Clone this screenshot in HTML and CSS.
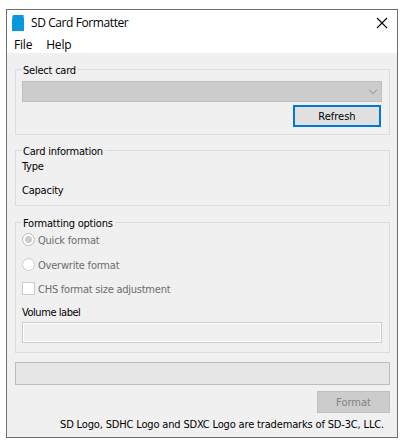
FILE: index.html
```
<!DOCTYPE html>
<html lang="en">
<head>
  <meta charset="UTF-8">
  <title>SD Card Formatter</title>
  <link rel="stylesheet" href="styles.css">
</head>
<body>
<div class="window">
  <header class="titlebar">
    <svg class="app-icon" width="12" height="16" viewBox="0 0 12 16">
      <path d="M1 0h10l1 1v15H0V3l1-1z" fill="#0898dc"/>
      <path d="M.5 1v3M11.5 1v2" stroke="#62bde8" stroke-width="1"/>
    </svg>
    <span class="title">SD Card Formatter</span>
    <svg class="close" width="10" height="10" viewBox="0 0 10 10">
      <path d="M0 0l10 10M10 0L0 10" stroke="#000" stroke-width="1.1"/>
    </svg>
  </header>
  <nav class="menu">
    <span class="menu-file">File</span>
    <span class="menu-help">Help</span>
  </nav>
  <main class="content">
    <fieldset class="group select-card">
      <legend><span class="t-select">Select card</span></legend>
      <div class="combo">
        <svg width="10" height="6" viewBox="0 0 10 6">
          <path d="M1 .7l4 4 4-4" fill="none" stroke="#a3a3a3" stroke-width="1.2"/>
        </svg>
      </div>
      <button class="btn refresh"><span class="t-refresh">Refresh</span></button>
    </fieldset>

    <fieldset class="group card-info">
      <legend><span class="t-info">Card information</span></legend>
      <div class="row"><span class="t-type">Type</span></div>
      <div class="row"><span class="t-capacity">Capacity</span></div>
    </fieldset>

    <fieldset class="group options">
      <legend><span class="t-options">Formatting options</span></legend>
      <label class="option"><i class="radio checked"></i><span class="t-quick">Quick format</span></label>
      <label class="option overwrite"><i class="radio"></i><span class="t-overwrite">Overwrite format</span></label>
      <label class="option chs"><i class="checkbox"></i><span class="t-chs">CHS format size adjustment</span></label>
      <div class="volume"><span class="t-volume">Volume label</span></div>
      <div class="field"></div>
    </fieldset>

    <div class="progress"></div>
    <button class="btn format" disabled><span class="t-format">Format</span></button>
    <footer class="notice"><span class="t-notice">SD Logo, SDHC Logo and SDXC Logo are trademarks of SD-3C, LLC.</span></footer>
  </main>
</div>
</body>
</html>
```
FILE: styles.css
```
* {
    box-sizing: border-box;
}

body {
    margin: 0;
    padding: 9px 0 0 6px;
    background: #fff;
    color: #000;
    font: 11px/15px "DejaVu Sans Condensed", "DejaVu Sans", sans-serif;
    font-stretch: condensed;
    letter-spacing: -0.22px;
}

.window {
    width: 392px;
    height: 429px;
    border: 1px solid #6e6e6e;
    background: #fff;
    white-space: nowrap;
}

/* title bar and menu */
.titlebar {
    display: flex;
    align-items: center;
    height: 25px;
    padding: 0 10px 0 5px;
    font: 12px/16px "Open Sans", "Noto Sans", sans-serif;
    letter-spacing: -0.41px;
}
.title {
    margin-left: 7px;
}
.close {
    margin-left: auto;
    overflow: visible;
}
.menu {
    display: flex;
    gap: 14px;
    height: 18px;
    padding-left: 7px;
    font: 12px/19px "Open Sans", "Noto Sans", sans-serif;
    letter-spacing: -0.2px;
}

.content {
    display: flex;
    flex-direction: column;
    height: 384px;
    padding: 9px 7px 0 8px;
    background: #f0f0f0;
}

/* group boxes */
.group {
    flex: none;
    min-width: 0;
    margin: 0;
    padding: 0 7px 0 6px;
    border: 1px solid #dcdcdc;
    line-height: 17px;
}
.group legend {
    height: 15px;
    padding: 0 2px 0 1px;
}
.select-card {
    height: 73px;
}
.card-info {
    height: 63px;
    margin-top: 8px;
}
.options {
    height: 138px;
    margin-top: 9px;
}

.combo {
    display: flex;
    align-items: center;
    justify-content: flex-end;
    height: 21px;
    margin-top: 4px;
    padding-right: 3px;
    border: 1px solid #bfbfbf;
    background: #ccc;
}

.btn {
    display: flex;
    align-items: center;
    justify-content: center;
    height: 22px;
    padding: 0;
    border: 1px solid #bfbfbf;
    border-radius: 0;
    background: #ccc;
    color: #838383;
    font: inherit;
}
.refresh {
    width: 88px;
    margin: 3px 1px 0 auto;
    border: 2px solid #0078d7;
    background: #e1e1e1;
    color: #000;
}

.row {
    height: 24px;
}

.option {
    display: flex;
    gap: 3px;
    height: 15px;
    margin-top: 2px;
    color: #6d6d6d;
}
.overwrite {
    margin-top: 10px;
}
.chs {
    margin-top: 9px;
}
.radio,
.checkbox {
    width: 13px;
    height: 13px;
    margin-top: 1px;
    border: 1px solid #ccc;
    background: #fff;
}
.radio {
    border-radius: 50%;
}
.checked {
    border-color: #bcbcbc;
    background: radial-gradient(circle, #ccc 3.2px, #fff 3.9px);
}
.volume {
    height: 15px;
    margin-top: 8px;
}
.field {
    height: 21px;
    margin-top: 3px;
    border: 1px solid #ccc;
    background: #f0f0f0;
    box-shadow: inset 0 0 0 1px #fff;
}

/* label tracking */
.t-chs {
    letter-spacing: -0.24px;
}
.t-volume {
    letter-spacing: -0.45px;
}
.t-notice {
    letter-spacing: -0.16px;
}

.progress {
    flex: none;
    height: 23px;
    margin-top: 9px;
    border: 1px solid #bcbcbc;
    background: #e6e6e6;
}
.format {
    flex: none;
    width: 73px;
    margin: 6px 0 0 auto;
}
.notice {
    margin: 4px 6px 0 auto;
}
```
